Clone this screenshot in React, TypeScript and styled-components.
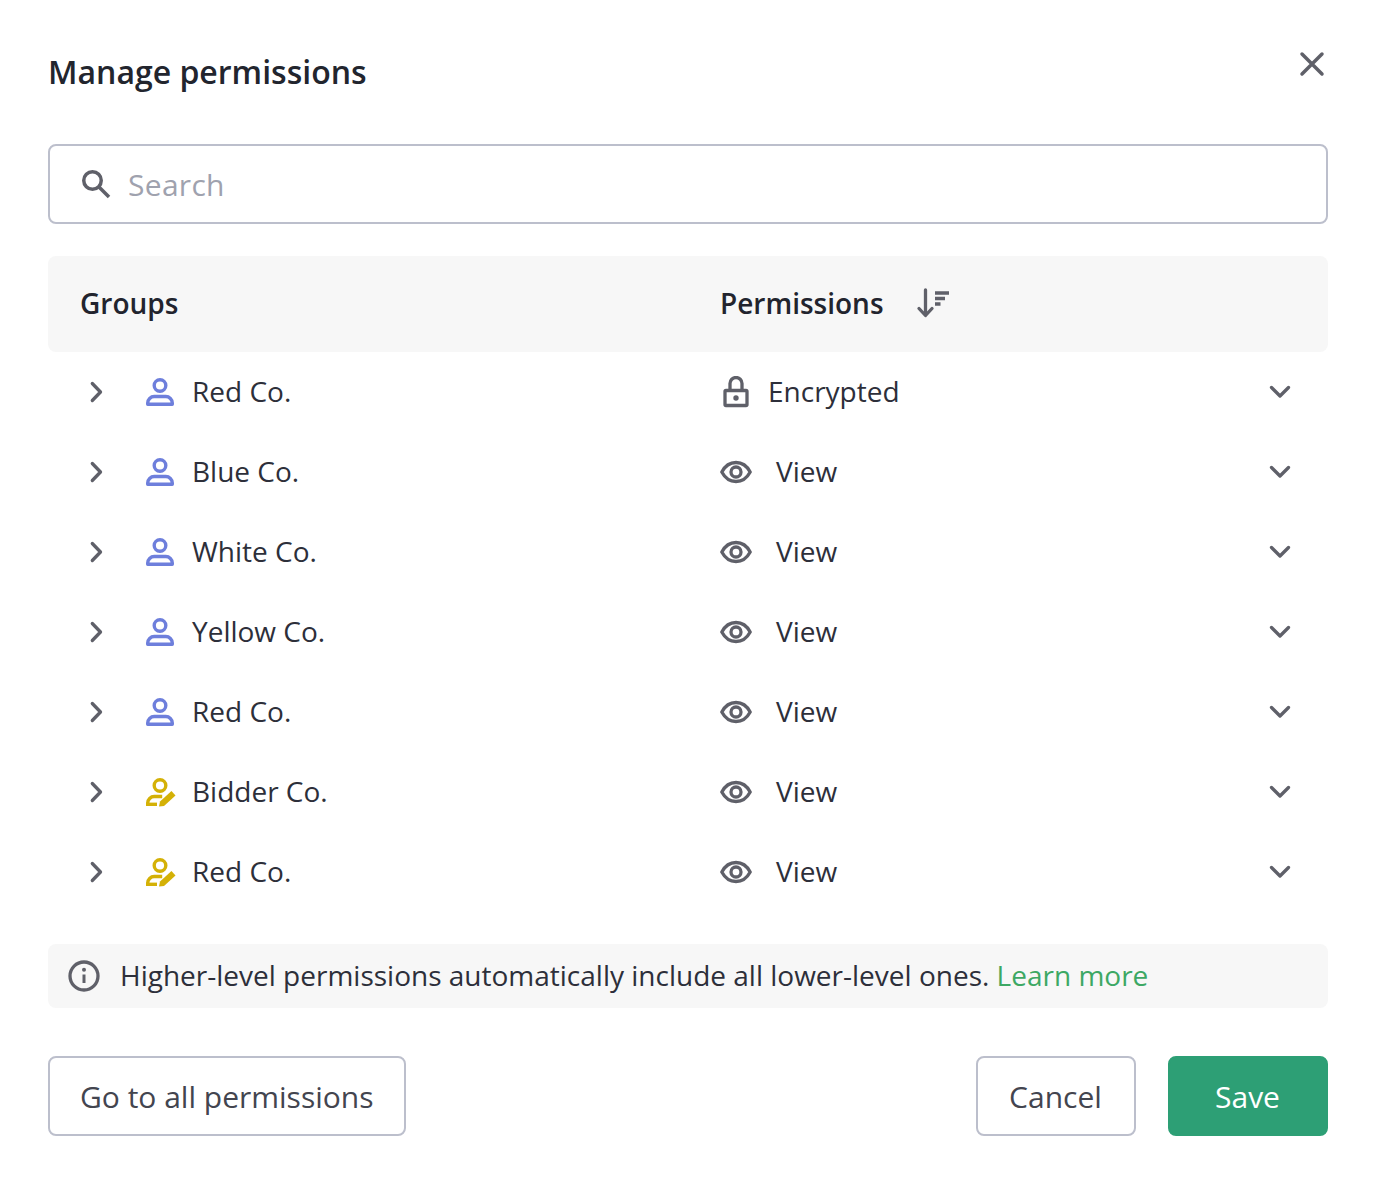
import styled, { createGlobalStyle } from "styled-components";

const GlobalStyle = createGlobalStyle`
  html, body {
    margin: 0;
    background: #fff;
  }
  * {
    box-sizing: border-box;
  }
`;

type Row = {
  name: string;
  kind: "person" | "bidder";
  permission: "Encrypted" | "View";
};

const rows: Row[] = [
  { name: "Red Co.", kind: "person", permission: "Encrypted" },
  { name: "Blue Co.", kind: "person", permission: "View" },
  { name: "White Co.", kind: "person", permission: "View" },
  { name: "Yellow Co.", kind: "person", permission: "View" },
  { name: "Red Co.", kind: "person", permission: "View" },
  { name: "Bidder Co.", kind: "bidder", permission: "View" },
  { name: "Red Co.", kind: "bidder", permission: "View" },
];

const GREY = "#5f6069";
const BLUE = "#6e7fdc";
const GOLD = "#d4b106";

const Icon = ({ size = 32, children }: { size?: number; children: React.ReactNode }) => (
  <svg width={size} height={size} viewBox={`0 0 ${size} ${size}`} fill="none" style={{ display: "block", flexShrink: 0 }}>
    {children}
  </svg>
);

const PersonIcon = () => (
  <Icon>
    <circle cx="16" cy="9.500" r="5.800" stroke={BLUE} strokeWidth="3.400" />
    <path d="M3.700 28.300V27c0-3.500 3-6.500 6.500-6.500h11.600c3.500 0 6.500 3 6.500 6.500v1.300z" stroke={BLUE} strokeWidth="3.400" strokeLinejoin="round" />
  </Icon>
);

const BidderIcon = () => (
  <Icon>
    <circle cx="16" cy="9.500" r="5.800" stroke={GOLD} strokeWidth="3.400" />
    <path d="M3.700 29v-2c0-3.500 3-6.500 6.500-6.500h8" stroke={GOLD} strokeWidth="3.400" />
    <path d="M2 28.300h11" stroke={GOLD} strokeWidth="3.400" />
    <path d="M15 30.500l1-5L27.500 15l4 4.500L20 30z" fill={GOLD} />
  </Icon>
);

const LockIcon = () => (
  <Icon>
    <path d="M10 14V7.500a6 6 0 0 1 12 0V14" stroke={GREY} strokeWidth="3.300" />
    <rect x="5" y="14.500" width="22" height="15" rx="1" stroke={GREY} strokeWidth="3.300" />
    <circle cx="16" cy="22" r="2.700" fill={GREY} />
  </Icon>
);

const EyeIcon = () => (
  <Icon>
    <path d="M1.800 16C5 10 10 6.500 16 6.500S27 10 30.200 16C27 22 22 25.500 16 25.500S5 22 1.800 16z" stroke={GREY} strokeWidth="3.300" strokeLinejoin="round" />
    <circle cx="16" cy="16" r="5" stroke={GREY} strokeWidth="3.300" />
  </Icon>
);

const ChevronRight = () => (
  <Icon>
    <path d="M12.300 7.500L20.500 16l-8.200 8.500" stroke={GREY} strokeWidth="3.300" strokeLinecap="round" strokeLinejoin="round" />
  </Icon>
);

const ChevronDown = () => (
  <Icon>
    <path d="M7.500 11.500L16 20l8.500-8.500" stroke={GREY} strokeWidth="3.300" strokeLinecap="round" strokeLinejoin="round" />
  </Icon>
);

const SearchIcon = () => (
  <Icon>
    <circle cx="12.500" cy="12.500" r="8.750" stroke={GREY} strokeWidth="3.500" />
    <path d="M19 19L29 29" stroke={GREY} strokeWidth="3.500" />
  </Icon>
);

const CloseIcon = () => (
  <Icon>
    <path d="M6 6l20 20M26 6L6 26" stroke={GREY} strokeWidth="3.500" strokeLinecap="round" />
  </Icon>
);

const SortIcon = () => (
  <Icon size={34}>
    <path d="M9.500 4v25M3 22.500L9.500 29.500l6.500-7" stroke={GREY} strokeWidth="3.300" strokeLinecap="round" strokeLinejoin="round" />
    <path d="M19 7h14M19 12.500h10M19 18h5.500" stroke={GREY} strokeWidth="3.300" />
  </Icon>
);

const InfoIcon = () => (
  <Icon>
    <circle cx="16" cy="16" r="14" stroke={GREY} strokeWidth="3.300" />
    <path d="M16 14.500V23" stroke={GREY} strokeWidth="3" />
    <circle cx="16" cy="9.800" r="2" fill={GREY} />
  </Icon>
);

export default function App() {
  return (
    <>
      <GlobalStyle />
      <Dialog>
        <Header>
          <Title>Manage permissions</Title>
          <CloseButton aria-label="Close">
            <CloseIcon />
          </CloseButton>
        </Header>

        <SearchBox>
          <SearchIcon />
          <SearchInput placeholder="Search" />
        </SearchBox>

        <TableHead>
          <GroupsHead>Groups</GroupsHead>
          <PermissionsHead>
            Permissions
            <SortIcon />
          </PermissionsHead>
        </TableHead>

        <Rows>
          {rows.map((row, i) => (
            <TableRow key={row.name + i}>
              <GroupCell>
                <ChevronRight />
                <GroupName>
                  {row.kind === "person" ? <PersonIcon /> : <BidderIcon />}
                  <RowText>{row.name}</RowText>
                </GroupName>
              </GroupCell>
              <PermissionCell $wide={row.permission === "View"}>
                {row.permission === "Encrypted" ? <LockIcon /> : <EyeIcon />}
                <RowText>{row.permission}</RowText>
              </PermissionCell>
              <ChevronDown />
            </TableRow>
          ))}
        </Rows>

        <Notice>
          <InfoIcon />
          <NoticeText>
            Higher-level permissions automatically include all lower-level ones. <LearnMore href="#">Learn more</LearnMore>
          </NoticeText>
        </Notice>

        <Footer>
          <Button>Go to all permissions</Button>
          <FooterRight>
            <Button $fixed>Cancel</Button>
            <Button $fixed $primary>
              Save
            </Button>
          </FooterRight>
        </Footer>
      </Dialog>
    </>
  );
}

const Dialog = styled.div`
  width: 1376px;
  height: 1184px;
  padding: 48px;
  background: #fff;
  font-family: "Open Sans", "Noto Sans", sans-serif;
  font-size: 28px;
  color: #22242e;
`;

const Header = styled.div`
  display: flex;
  justify-content: space-between;
  align-items: flex-start;
  height: 96px;
`;

const Title = styled.h1`
  margin: 0;
  font-size: 32px;
  line-height: 48px;
  font-weight: 600;
  color: #22252e;
`;

const CloseButton = styled.button`
  padding: 0;
  border: 0;
  background: none;
`;

const SearchBox = styled.div`
  display: flex;
  align-items: center;
  gap: 16px;
  height: 80px;
  padding: 0 30px;
  border: 2px solid #bcbfcc;
  border-radius: 8px;
`;

const SearchInput = styled.input`
  flex: 1;
  border: 0;
  outline: 0;
  padding: 0;
  font: inherit;
  font-size: 30px;
  letter-spacing: 0.3px;
  color: #22242e;

  &::placeholder {
    color: #9fa2ae;
    opacity: 1;
  }
`;

const TableHead = styled.div`
  display: flex;
  align-items: center;
  height: 96px;
  margin-top: 32px;
  padding: 0 32px 2px;
  background: #f7f7f7;
  border-radius: 8px;
  font-weight: 600;
`;

const GroupsHead = styled.div`
  width: 640px;
`;

const PermissionsHead = styled.div`
  display: flex;
  align-items: center;
  gap: 32px;
`;

const Rows = styled.div`
  display: flex;
  flex-direction: column;
`;

const TableRow = styled.div`
  display: flex;
  align-items: center;
  height: 80px;
  padding: 0 32px;
`;

const GroupCell = styled.div`
  display: flex;
  align-items: center;
  gap: 32px;
  width: 640px;
`;

const GroupName = styled.div`
  display: flex;
  align-items: center;
  gap: 16px;
`;

const PermissionCell = styled.div<{ $wide: boolean }>`
  display: flex;
  align-items: center;
  gap: ${(p) => (p.$wide ? "24px" : "16px")};
  flex: 1;
`;

const RowText = styled.span`
  padding-bottom: 2px;
  color: #2d2f3a;
`;

const Notice = styled.div`
  display: flex;
  align-items: center;
  gap: 20px;
  height: 64px;
  margin-top: 32px;
  padding: 0 20px;
  background: #f7f7f7;
  border-radius: 8px;
`;

const NoticeText = styled.span`
  padding-bottom: 2px;
  color: #2d2f3a;
`;

const LearnMore = styled.a`
  color: #3da864;
  text-decoration: none;
`;

const Footer = styled.div`
  display: flex;
  justify-content: space-between;
  margin-top: 48px;
`;

const FooterRight = styled.div`
  display: flex;
  gap: 32px;
`;

const Button = styled.button<{ $primary?: boolean; $fixed?: boolean }>`
  height: 80px;
  width: ${(p) => (p.$fixed ? "160px" : "auto")};
  padding: ${(p) => (p.$fixed ? "0 1px 0 0" : "0 30px")};
  border: 2px solid ${(p) => (p.$primary ? "#2d9f75" : "#bcbfcc")};
  border-radius: 8px;
  background: ${(p) => (p.$primary ? "#2d9f75" : "#fff")};
  color: ${(p) => (p.$primary ? "#fff" : "#43454f")};
  font: inherit;
  font-size: 30px;
`;
